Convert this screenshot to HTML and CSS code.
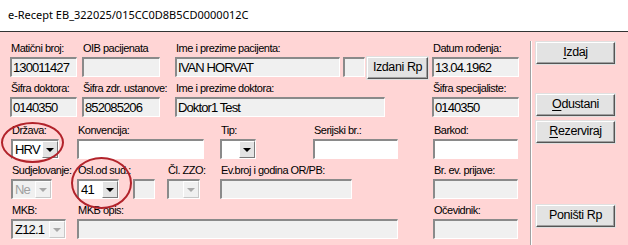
FILE: index.html
```html
<!DOCTYPE html>
<html lang="hr">

<head>
    <meta charset="UTF-8">
    <title>e-Recept</title>
    <link rel="stylesheet" href="styles.css">
</head>

<body>
    <div class="window">
        <div class="titlebar">e-Recept EB_322025/015CC0D8B5CD0000012C</div>

        <div class="form">
            <div class="left">
                <!-- red 1 -->
                <div class="row">
                    <div class="field f-mat"><label>Matični broj:</label><div class="inp">130011427</div></div>
                    <div class="field f-oib"><label>OIB pacijenata</label><div class="inp"></div></div>
                    <div class="field f-pac"><label>Ime i prezime pacijenta:</label><div class="inp">IVAN HORVAT</div></div>
                    <div class="field f-small"><label></label><div class="inp"></div></div>
                    <div class="field f-izdani"><label></label><div class="btn">Izdani Rp</div></div>
                    <div class="field f-datum"><label>Datum rođenja:</label><div class="inp">13.04.1962</div></div>
                </div>
                <!-- red 2 -->
                <div class="row">
                    <div class="field f-mat"><label>Šifra doktora:</label><div class="inp">0140350</div></div>
                    <div class="field f-oib"><label>Šifra zdr. ustanove:</label><div class="inp">852085206</div></div>
                    <div class="field f-dok"><label>Ime i prezime doktora:</label><div class="inp">Doktor1 Test</div></div>
                    <div class="field f-spec"><label>Šifra specijaliste:</label><div class="inp">0140350</div></div>
                </div>
                <!-- red 3 -->
                <div class="row row3">
                    <div class="field f-drz"><label>Država:</label><div class="sel white"><span class="val">HRV</span><span class="arr"></span></div></div>
                    <div class="field f-konv"><label>Konvencija:</label><div class="inp white"></div></div>
                    <div class="field f-tip"><label>Tip:</label><div class="sel white"><span class="val"></span><span class="arr"></span></div></div>
                    <div class="field f-ser"><label>Serijski br.:</label><div class="inp white"></div></div>
                    <div class="field f-bar"><label>Barkod:</label><div class="inp white"></div></div>
                </div>
                <!-- red 4 -->
                <div class="row">
                    <div class="field f-sud"><label>Sudjelovanje:</label><div class="sel off"><span class="val">Ne</span><span class="arr"></span></div></div>
                    <div class="field f-osl"><label>Osl.od sud.:</label><div class="sel white"><span class="val">41</span><span class="arr"></span></div></div>
                    <div class="field f-box"><label></label><div class="inp"></div></div>
                    <div class="field f-zzo"><label>Čl. ZZO:</label><div class="sel off"><span class="val"></span><span class="arr"></span></div></div>
                    <div class="field f-ev"><label>Ev.broj i godina OR/PB:</label><div class="inp"></div></div>
                    <div class="field f-prij"><label>Br. ev. prijave:</label><div class="inp"></div></div>
                </div>
                <!-- red 5 -->
                <div class="row">
                    <div class="field f-mkb"><label>MKB:</label><div class="sel off dark"><span class="val">Z12.1</span><span class="arr"></span></div></div>
                    <div class="field f-opis"><label>MKB opis:</label><div class="inp"></div></div>
                    <div class="field f-oce"><label>Očevidnik:</label><div class="inp"></div></div>
                </div>
            </div>

            <div class="right">
                <div class="btn big b-izdaj"><u>I</u>zdaj</div>
                <div class="btn big b-odustani"><u>O</u>dustani</div>
                <div class="btn big b-rez"><u>R</u>ezerviraj</div>
                <div class="btn big b-ponisti">Poništi Rp</div>
            </div>

            <!-- oznake -->
            <div class="mark mark1"></div>
            <div class="mark mark2"></div>
        </div>
    </div>
</body>

</html>
```

FILE: styles.css
```css
html,
body {
    margin: 0;
    padding: 0;
}

.window {
    width: 628px;
    height: 245px;
    overflow: hidden;
    font-family: "Liberation Sans", Arial, sans-serif;
}

.titlebar {
    height: 31px;
    line-height: 30px;
    padding-left: 8px;
    background: #fff;
    border-bottom: 1px solid #333;
    font-family: "Noto Sans", "Open Sans", sans-serif;
    font-size: 11px;
    color: #000;
}

/* forma */
.form {
    position: relative;
    display: flex;
    height: 213px;
    background: #ffd5d5;
}

.left {
    width: 520px;
    padding-top: 10px;
    padding-left: 10px;
    box-sizing: border-box;
}

.row {
    display: flex;
    height: 40px;
}

.row3 {
    margin-top: 2px;
}

.field {
    flex: none;
    display: flex;
    flex-direction: column;
}

.field label {
    display: block;
    height: 15px;
    line-height: 13px;
    font-size: 11px;
    letter-spacing: -0.5px;
    color: #000;
    white-space: nowrap;
    padding-left: 1px;
}

.inp {
    height: 20px;
    box-sizing: border-box;
    border-top: 2px solid #8a8a8a;
    border-left: 2px solid #8a8a8a;
    border-right: 1px solid #fff;
    border-bottom: 1px solid #fff;
    background: #f0f0f0;
    font-size: 13px;
    letter-spacing: -0.9px;
    line-height: 17px;
    padding-left: 1px;
    white-space: nowrap;
    overflow: hidden;
}

.white {
    background: #fff;
}

/* padajuci izbornici */
.sel {
    display: flex;
    height: 20px;
    box-sizing: border-box;
    border-top: 2px solid #8a8a8a;
    border-left: 2px solid #8a8a8a;
    border-right: 1px solid #fff;
    border-bottom: 1px solid #fff;
    font-size: 13px;
    letter-spacing: -0.8px;
    line-height: 17px;
}

.sel .val {
    flex: 1;
    overflow: hidden;
    white-space: nowrap;
    padding-left: 2px;
}

.sel .arr {
    flex: none;
    width: 16px;
    box-sizing: border-box;
    background: #e3e3e3;
    border-top: 1px solid #fff;
    border-left: 1px solid #fff;
    border-right: 1px solid #7a7a7a;
    border-bottom: 1px solid #7a7a7a;
    position: relative;
}

.sel .arr::after {
    content: "";
    position: absolute;
    left: 3px;
    top: 6px;
    border-left: 4px solid transparent;
    border-right: 4px solid transparent;
    border-top: 4px solid #000;
}

.sel.off {
    background: #f0f0f0;
    color: #a0a0a0;
}

.sel.off.dark {
    color: #000;
}

.sel.off .arr {
    background: #f0f0f0;
    border-color: #fff #c8c8c8 #c8c8c8 #fff;
}

.sel.off .arr::after {
    border-top-color: #a8a8a8;
}

/* gumbi */
.btn {
    box-sizing: border-box;
    height: 22px;
    background: #e3e3e3;
    border-top: 1px solid #fff;
    border-left: 1px solid #fff;
    border-right: 1px solid #555;
    border-bottom: 1px solid #555;
    box-shadow: inset -1px -1px 0 #a0a0a0, 0 0 0 1px #e0e0e0;
    font-size: 12.5px;
    letter-spacing: -0.4px;
    line-height: 19px;
    text-align: center;
    color: #000;
}

.btn u {
    text-decoration-thickness: 1px;
    text-underline-offset: 2px;
}

/* sirine polja */
.f-mat { width: 67px; }
.f-oib { width: 78px; margin-left: 5px; }
.f-pac { width: 165px; margin-left: 15px; }
.f-small { width: 22px; margin-left: 3px; }
.f-izdani { width: 61px; margin-left: 2px; }
.f-datum { width: 87px; margin-left: 4px; }

.f-dok { width: 210px; margin-left: 15px; }
.f-spec { width: 87px; margin-left: 47px; }

.f-drz { width: 48px; margin-left: 1px; }
.f-konv { width: 127px; margin-left: 18px; }
.f-tip { width: 36px; margin-left: 16px; }
.f-ser { width: 85px; margin-left: 57px; }
.f-bar { width: 85px; margin-left: 35px; }

.f-sud { width: 41px; margin-left: 1px; }
.f-osl { width: 42px; margin-left: 25px; }
.f-box { width: 22px; margin-left: 14px; }
.f-zzo { width: 33px; margin-left: 12px; }
.f-ev { width: 132px; margin-left: 20px; }
.f-prij { width: 85px; margin-left: 81px; }

.f-mkb { width: 55px; margin-left: 1px; }
.f-opis { width: 321px; margin-left: 11px; }
.f-oce { width: 85px; margin-left: 35px; }

/* desni stupac */
.right {
    margin-left: 10px;
    margin-top: 9px;
    padding-left: 5px;
    border-left: 1px solid #a0a0a0;
    box-shadow: inset 1px 0 0 #fff;
    display: flex;
    flex-direction: column;
}

.big {
    width: 79px;
    margin-top: 1px;
}

.b-odustani { margin-top: 30px; }
.b-rez { margin-top: 5px; }
.b-ponisti { margin-top: 62px; }

/* crvene oznake */
.mark {
    position: absolute;
    border: 2px solid #b2232b;
    border-radius: 50%;
    box-sizing: border-box;
}

.mark1 {
    left: 1px;
    top: 90px;
    width: 63px;
    height: 41px;
}

.mark2 {
    left: 71px;
    top: 125px;
    width: 61px;
    height: 52px;
}
```
